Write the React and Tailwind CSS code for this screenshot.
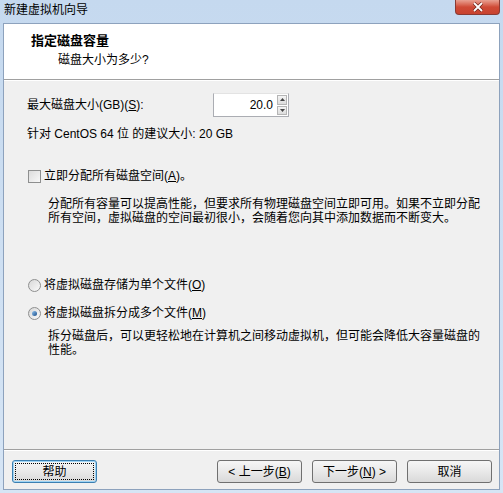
import { useState } from "react";

const font = { fontFamily: '"Liberation Sans", "Noto Sans CJK SC", sans-serif' };

function Btn({ children, focused }) {
  return (
    <button
      className={
        "h-[23px] w-[85px] rounded-[3px] border text-[12px] text-black leading-none flex items-center justify-center bg-gradient-to-b from-[#f6f6f6] via-[#e9e9e9] to-[#d9d9d9] " +
        (focused ? "border-[#3c7fb1] shadow-[inset_0_0_0_1px_#9fd5f5]" : "border-[#707070]")
      }
    >
      {focused ? (
        <span className="flex items-center justify-center w-[79px] h-[17px] border border-dotted border-black">
          {children}
        </span>
      ) : (
        children
      )}
    </button>
  );
}

export default function App() {
  const [alloc, setAlloc] = useState(false);
  const [split, setSplit] = useState(true);

  return (
    <div
      className="w-[503px] h-[493px] flex flex-col bg-gradient-to-b from-[#c5d9ef] to-[#d6e5f5] text-[12px] text-black"
      style={font}
    >
      {/* title bar */}
      <div className="h-[23px] flex items-start">
        <span className="pl-[4px] pt-[3px] leading-[14px] text-[12px] text-black">新建虚拟机向导</span>
        <div className="ml-auto mr-[3px] w-[45px] h-[15px] rounded-b-[4px] border border-t-0 border-[#8a3a33] bg-gradient-to-b from-[#e8a092] via-[#cf4a36] to-[#c8432f] flex items-center justify-center">
          <svg width="12" height="10" viewBox="0 0 12 10">
            <path d="M2 1 L10 9 M10 1 L2 9" stroke="#6b2219" strokeWidth="3.2" />
            <path d="M2 1 L10 9 M10 1 L2 9" stroke="#ffffff" strokeWidth="1.8" />
          </svg>
        </div>
      </div>

      {/* client area */}
      <div className="flex-1 mx-[3px] mb-[3px] flex flex-col bg-[#f0f0f0] border border-[#8da2bd]">
        {/* header */}
        <div className="h-[56px] bg-white border-b border-[#a0a0a0] pl-[27px] pt-[9px]">
          <div className="font-bold text-[13px] leading-[16px]">指定磁盘容量</div>
          <div className="mt-[3px] pl-[27px] leading-[16px]">磁盘大小为多少?</div>
        </div>
        <div className="h-px bg-white" />

        {/* body */}
        <div className="flex-1 flex flex-col">
          <div className="mt-[11px] pl-[23px] flex items-center h-[26px]">
            <span className="w-[186px]">
              最大磁盘大小(GB)(<span className="underline">S</span>):
            </span>
            <div className="flex items-stretch h-[24px] border border-[#abadb3] border-t-[#e3e3e3] bg-white">
              <div className="w-[62px] flex items-center justify-end pr-[3px]">20.0</div>
              <div className="w-[12px] flex flex-col gap-px p-px">
                <div className="flex-1 border border-[#b5b5b5] bg-gradient-to-b from-[#f4f4f4] to-[#dcdcdc] flex items-center justify-center">
                  <svg width="5" height="3" viewBox="0 0 5 3"><path d="M0 3 L2.5 0 L5 3Z" fill="#444" /></svg>
                </div>
                <div className="flex-1 border border-[#b5b5b5] bg-gradient-to-b from-[#f4f4f4] to-[#dcdcdc] flex items-center justify-center">
                  <svg width="5" height="3" viewBox="0 0 5 3"><path d="M0 0 L2.5 3 L5 0Z" fill="#444" /></svg>
                </div>
              </div>
            </div>
          </div>

          <div className="mt-[8px] pl-[23px] leading-[16px]">针对 CentOS 64 位 的建议大小: 20 GB</div>

          <label className="mt-[26px] pl-[24px] flex items-center h-[16px]" onClick={() => setAlloc(!alloc)}>
            <span className="w-[13px] h-[13px] border border-[#8e8f8f] bg-gradient-to-br from-[#dcdcdc] to-[#f8f8f8] flex items-center justify-center">
              {alloc && <span className="text-[10px] leading-none">✓</span>}
            </span>
            <span className="ml-[3px]">
              立即分配所有磁盘空间(<span className="underline">A</span>)。
            </span>
          </label>

          <div className="mt-[13px] pl-[44px] pr-[18px] leading-[14px]">
            分配所有容量可以提高性能，但要求所有物理磁盘空间立即可用。如果不立即分配所有空间，虚拟磁盘的空间最初很小，会随着您向其中添加数据而不断变大。
          </div>

          <label className="mt-[52px] pl-[24px] flex items-center h-[16px]" onClick={() => setSplit(false)}>
            <Radio on={!split} />
            <span className="ml-[3px]">
              将虚拟磁盘存储为单个文件(<span className="underline">O</span>)
            </span>
          </label>

          <label className="mt-[12px] pl-[24px] flex items-center h-[16px]" onClick={() => setSplit(true)}>
            <Radio on={split} />
            <span className="ml-[3px]">
              将虚拟磁盘拆分成多个文件(<span className="underline">M</span>)
            </span>
          </label>

          <div className="mt-[8px] pl-[44px] pr-[18px] leading-[14px]">
            拆分磁盘后，可以更轻松地在计算机之间移动虚拟机，但可能会降低大容量磁盘的性能。
          </div>
        </div>

        {/* footer */}
        <div className="border-t border-[#a0a0a0]" />
        <div className="h-px bg-white" />
        <div className="h-[38px] flex items-start pt-[9px] pl-[8px] pr-[7px]">
          <Btn focused>帮助</Btn>
          <div className="ml-auto flex">
            <Btn>&lt; 上一步(<span className="underline">B</span>)</Btn>
            <div className="w-[10px]" />
            <Btn>下一步(<span className="underline">N</span>) &gt;</Btn>
            <div className="w-[10px]" />
            <Btn>取消</Btn>
          </div>
        </div>
      </div>
    </div>
  );
}

function Radio({ on }) {
  return (
    <span className="w-[13px] h-[13px] rounded-full border border-[#8e8f8f] bg-gradient-to-br from-[#d8d8d8] to-[#fafafa] flex items-center justify-center">
      {on && <span className="w-[5px] h-[5px] rounded-full bg-gradient-to-br from-[#8fc3f0] to-[#1b4f8a]" />}
    </span>
  );
}
